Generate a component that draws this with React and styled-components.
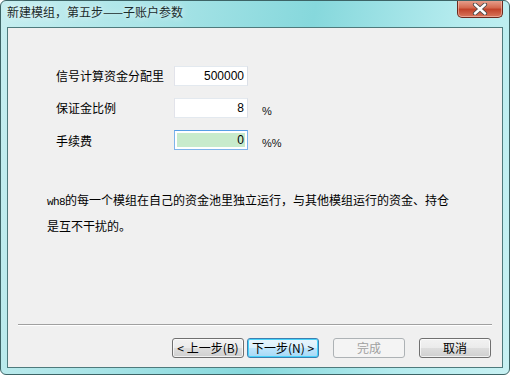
import React from 'react';
import styled, { createGlobalStyle } from 'styled-components';

const Global = createGlobalStyle`
  html, body {
    margin: 0;
    padding: 0;
    background: #ffffff;
  }
  body {
    font-family: "Noto Sans CJK SC", "Liberation Sans", sans-serif;
    font-size: 12px;
    color: #000;
  }
`

const Window = styled.div`
  width: 510px;
  height: 375px;
  box-sizing: border-box;
  display: flex;
  flex-direction: column;
  border: 1px solid #3d6466;
  border-radius: 6px;
  background: linear-gradient(100deg, #c6eef0 0%, #a6e3e6 30%, #86d8dc 55%, #b4ebee 80%, #c8f1f3 100%);
  overflow: hidden;
`

const TitleBar = styled.div`
  height: 26px;
  flex: 0 0 26px;
  display: flex;
  align-items: flex-start;
  justify-content: space-between;
  padding: 0 6px;
`

const Title = styled.div`
  padding-top: 3px;
  font-size: 12px;
  line-height: 16px;
  color: #1b2b2c;
  text-shadow: 0 0 6px rgba(255, 255, 255, 0.9);
`

const CloseButton = styled.div`
  width: 46px;
  height: 18px;
  box-sizing: border-box;
  margin-top: -1px;
  display: flex;
  align-items: center;
  justify-content: center;
  border: 1px solid #6b2a1e;
  border-top: none;
  border-radius: 0 0 5px 5px;
  background: linear-gradient(180deg, #e8a593 0%, #d46a50 45%, #c1432a 55%, #d8765c 100%);
  box-shadow: inset 0 0 0 1px rgba(255, 210, 200, 0.5);
`

const Client = styled.div`
  flex: 1;
  margin: 0 6px 6px 6px;
  box-sizing: border-box;
  border: 1px solid #4e7a7c;
  background: #f0f0f0;
  display: flex;
  flex-direction: column;
`

const Form = styled.div`
  display: grid;
  grid-template-columns: 118px 74px auto;
  grid-auto-rows: 20px;
  row-gap: 12px;
  align-items: center;
  padding: 38px 0 0 48px;
`

const Label = styled.div`
  line-height: 20px;
  padding-top: ${p => p.$down || 0}px;
`

const Field = styled.div`
  height: 20px;
  box-sizing: border-box;
  border: 1px solid #abadb3;
  border-top-color: #e3e9ef;
  border-left-color: #e2e3ea;
  border-right-color: #dbdfe6;
  border-bottom-color: #e3e9ef;
  background: #fff;
  padding: 2px;
  ${p => p.$focus && `border-color: #7eb4ea; border-top-color: #569de5;`}
`

const FieldInner = styled.div`
  height: 100%;
  box-sizing: border-box;
  background: ${p => p.$fill || '#fff'};
  text-align: right;
  padding-right: 1px;
  line-height: 14px;
  font-family: "Liberation Sans", sans-serif;
  font-size: 12px;
`

const Unit = styled.div`
  font-family: "Liberation Sans", sans-serif;
  font-size: 11px;
  padding-top: 6px;
  margin-left: 14px;
  color: #111;
`

const Note = styled.div`
  padding: 37px 0 0 39px;
  font-size: 12px;
`

const NoteLine = styled.div`
  height: 26px;
  line-height: 26px;
`

const Mono = styled.span`
  font-family: "Liberation Mono", monospace;
  font-size: 11px;
  letter-spacing: -0.6px;
`

const Spacer = styled.div`
  flex: 1;
`

const Separator = styled.div`
  margin: 0 10px;
  border-top: 1px solid #a0a0a0;
  border-bottom: 1px solid #ffffff;
`

const ButtonRow = styled.div`
  display: flex;
  justify-content: flex-end;
  padding: 12px 11px 9px 0;
`

const Button = styled.button`
  width: 72px;
  height: 20px;
  box-sizing: border-box;
  margin-left: ${p => p.$gap || 0}px;
  padding: 0;
  font-family: "Noto Sans CJK SC", sans-serif;
  font-size: 12px;
  line-height: 16px;
  border-radius: 3px;
  border: 1px solid #707070;
  background: linear-gradient(180deg, #f2f2f2 0%, #ebebeb 48%, #dddddd 52%, #cfcfcf 100%);
  color: #000;
  box-shadow: inset 0 0 0 1px rgba(255, 255, 255, 0.7);
  ${p => p.$default && `
    border-color: #3c7fb1;
    background: linear-gradient(180deg, #eaf6fd 0%, #d9f0fc 48%, #bee6fd 52%, #a7d9f5 100%);
    box-shadow: inset 0 0 0 1px #48d3fa;
  `}
  ${p => p.disabled && `
    border-color: #adb2b5;
    background: #f4f4f4;
    color: #a0a0a0;
    box-shadow: none;
  `}
`

const CloseIcon = () => (
  <svg width="16" height="12" viewBox="0 0 16 12">
    <path d="M3 1.5 L13 10.5 M13 1.5 L3 10.5" stroke="#4a4a4a" strokeWidth="4.2" strokeLinecap="round" />
    <path d="M3 1.5 L13 10.5 M13 1.5 L3 10.5" stroke="#ffffff" strokeWidth="2.4" strokeLinecap="round" />
  </svg>
)

export default function App() {
  return (
    <>
      <Global />
      <Window>
        <TitleBar>
          <Title>新建模组，第五步——子账户参数</Title>
          <CloseButton><CloseIcon /></CloseButton>
        </TitleBar>
        <Client>
          <Form>
            <Label>信号计算资金分配里</Label>
            <Field><FieldInner>500000</FieldInner></Field>
            <span />
            <Label>保证金比例</Label>
            <Field><FieldInner>8</FieldInner></Field>
            <Unit>%</Unit>
            <Label $down={2}>手续费</Label>
            <Field $focus><FieldInner $fill="#c8ebcc">0</FieldInner></Field>
            <Unit>%%</Unit>
          </Form>
          <Note>
            <NoteLine><Mono>wh8</Mono>的每一个模组在自己的资金池里独立运行，与其他模组运行的资金、持仓</NoteLine>
            <NoteLine>是互不干扰的。</NoteLine>
          </Note>
          <Spacer />
          <Separator />
          <ButtonRow>
            <Button>&lt; 上一步(B)</Button>
            <Button $default $gap={3}>下一步(N) &gt;</Button>
            <Button disabled $gap={14}>完成</Button>
            <Button $gap={14}>取消</Button>
          </ButtonRow>
        </Client>
      </Window>
    </>
  );
}
